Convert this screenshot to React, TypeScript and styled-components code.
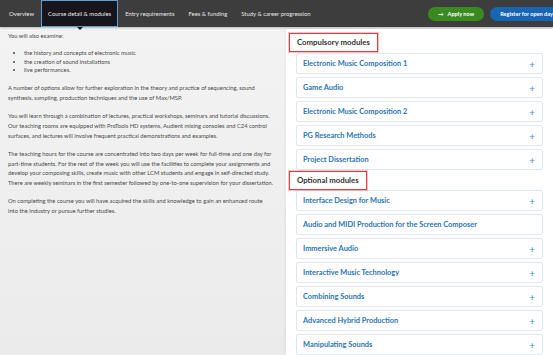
import styled, { createGlobalStyle } from 'styled-components'

const GlobalStyle = createGlobalStyle`
    html, body {
        margin: 0;
        padding: 0;
        overflow: hidden;
    }
    body {
        width: 553px;
        height: 355px;
        font-family: Lato, "Open Sans", sans-serif;
        background: #efefef;
    }
`

const Page = styled.div`
    width: 553px;
    height: 355px;
    display: flex;
    flex-direction: column;
    overflow: hidden;
`

// * 상단 탭 네비게이션
const Nav = styled.nav`
    height: 27px;
    flex-shrink: 0;
    background: #3d3d3d;
    display: flex;
    align-items: stretch;
    padding-left: 2px;
    box-shadow: 0 1px 2px rgba(0, 0, 0, 0.25);
    position: relative;
    z-index: 2;
`

const Tab = styled.div<{ $active?: boolean }>`
    position: relative;
    display: flex;
    align-items: center;
    padding: 0 6px;
    font-size: 5.9px;
    color: #e6e6e6;
    white-space: nowrap;
    border: 1px solid ${props => props.$active ? '#5f9fd6' : 'transparent'};
    background: ${props => props.$active ? '#17161d' : 'transparent'};
    &::after {
        content: '';
        display: ${props => props.$active ? 'block' : 'none'};
        position: absolute;
        left: 50%;
        bottom: -4px;
        margin-left: -3px;
        border-left: 3px solid transparent;
        border-right: 3px solid transparent;
        border-top: 3px solid #17161d;
    }
`

const Actions = styled.div`
    margin-left: auto;
    display: flex;
    align-items: center;
    gap: 6px;
    margin-right: -10px;
`

const Pill = styled.button<{ $color: string }>`
    height: 14px;
    border: none;
    border-radius: 7px;
    background: ${props => props.$color};
    color: #fff;
    font-family: Lato, sans-serif;
    font-weight: 700;
    font-size: 5.6px;
    padding: 0 10px;
    white-space: nowrap;
    display: flex;
    align-items: center;
    gap: 4px;
`

const Main = styled.div`
    flex: 1;
    display: flex;
    min-height: 0;
`

const Copy = styled.div`
    width: 286px;
    flex-shrink: 0;
    box-sizing: border-box;
    padding: 4px 8px 0 8px;
    background: linear-gradient(#f3f3f3, #ebebeb);
    color: #4a4a4a;
    font-size: 5.8px;
    line-height: 9.7px;
    p {
        margin: 0 0 8.5px;
        white-space: nowrap;
    }
    ul {
        margin: 0 0 8.5px;
        padding-left: 16px;
        line-height: 8.6px;
    }
`

const Panel = styled.div`
    flex: 1;
    background: #fff;
    margin-top: 2px;
    padding: 4px 10px 0 3px;
    box-shadow: -1px 0 2px rgba(0, 0, 0, 0.06);
`

const Heading = styled.div<{ $top?: number }>`
    width: fit-content;
    box-sizing: border-box;
    height: 19px;
    line-height: 17px;
    margin-top: ${props => props.$top || 0}px;
    padding: 0 7px;
    border: 1px solid #ec3940;
    outline: 1px solid rgba(236, 57, 64, 0.3);
    font-size: 7.8px;
    font-weight: 700;
    color: #333;
`

const ModuleList = styled.div<{ $top: number }>`
    display: flex;
    flex-direction: column;
    gap: 3px;
    margin: ${props => props.$top}px 0 0 7px;
`

const ModuleRow = styled.div`
    height: 21px;
    box-sizing: border-box;
    border: 1px solid #dde8f2;
    border-radius: 2px;
    display: flex;
    align-items: center;
    justify-content: space-between;
    padding: 0 7px 0 6px;
    font-size: 7.4px;
    font-weight: 700;
    color: #2a74b8;
`

const Plus = styled.span`
    font-size: 10px;
    font-weight: 400;
    color: #4a8ac6;
`

interface Module {
    name: string,
    expandable: boolean,
}

const compulsory: Module[] = [
    { name: 'Electronic Music Composition 1', expandable: true },
    { name: 'Game Audio', expandable: true },
    { name: 'Electronic Music Composition 2', expandable: true },
    { name: 'PG Research Methods', expandable: true },
    { name: 'Project Dissertation', expandable: true },
]

const optional: Module[] = [
    { name: 'Interface Design for Music', expandable: true },
    { name: 'Audio and MIDI Production for the Screen Composer', expandable: false },
    { name: 'Immersive Audio', expandable: true },
    { name: 'Interactive Music Technology', expandable: true },
    { name: 'Combining Sounds', expandable: true },
    { name: 'Advanced Hybrid Production', expandable: true },
    { name: 'Manipulating Sounds', expandable: true },
]

const tabs = ['Overview', 'Course detail & modules', 'Entry requirements', 'Fees & funding', 'Study & career progression']

const App = () => {
    return <Page>
        <GlobalStyle />
        <Nav>
            {
                tabs.map(t => <Tab key={t} $active={t === 'Course detail & modules'}>{t}</Tab>)
            }
            <Actions>
                <Pill $color="#3a8b1f">
                    <span>→</span> Apply now
                </Pill>
                <Pill $color="#1766b6">Register for open day</Pill>
            </Actions>
        </Nav>
        <Main>
            <Copy>
                <p>You will also examine:</p>
                <ul>
                    <li>the history and concepts of electronic music</li>
                    <li>the creation of sound installations</li>
                    <li>live performances.</li>
                </ul>
                <p>A number of options allow for further exploration in the theory and practice of sequencing, sound<br />synthesis, sampling, production techniques and the use of Max/MSP.</p>
                <p>You will learn through a combination of lectures, practical workshops, seminars and tutorial discussions.<br />Our teaching rooms are equipped with ProTools HD systems, Audient mixing consoles and C24 control<br />surfaces, and lectures will involve frequent practical demonstrations and examples.</p>
                <p>The teaching hours for the course are concentrated into two days per week for full-time and one day for<br />part-time students. For the rest of the week you will use the facilities to complete your assignments and<br />develop your composing skills, create music with other LCM students and engage in self-directed study.<br />There are weekly seminars in the first semester followed by one-to-one supervision for your dissertation.</p>
                <p>On completing the course you will have acquired the skills and knowledge to gain an enhanced route<br />into the industry or pursue further studies.</p>
            </Copy>
            <Panel>
                <Heading>Compulsory modules</Heading>
                <ModuleList $top={1}>
                    {
                        compulsory.map(m => <ModuleRow key={m.name}>
                            {m.name}
                            {m.expandable && <Plus>+</Plus>}
                        </ModuleRow>)
                    }
                </ModuleList>
                <Heading $top={1}>Optional modules</Heading>
                <ModuleList $top={0}>
                    {
                        optional.map(m => <ModuleRow key={m.name}>
                            {m.name}
                            {m.expandable && <Plus>+</Plus>}
                        </ModuleRow>)
                    }
                </ModuleList>
            </Panel>
        </Main>
    </Page>
}
export default App
